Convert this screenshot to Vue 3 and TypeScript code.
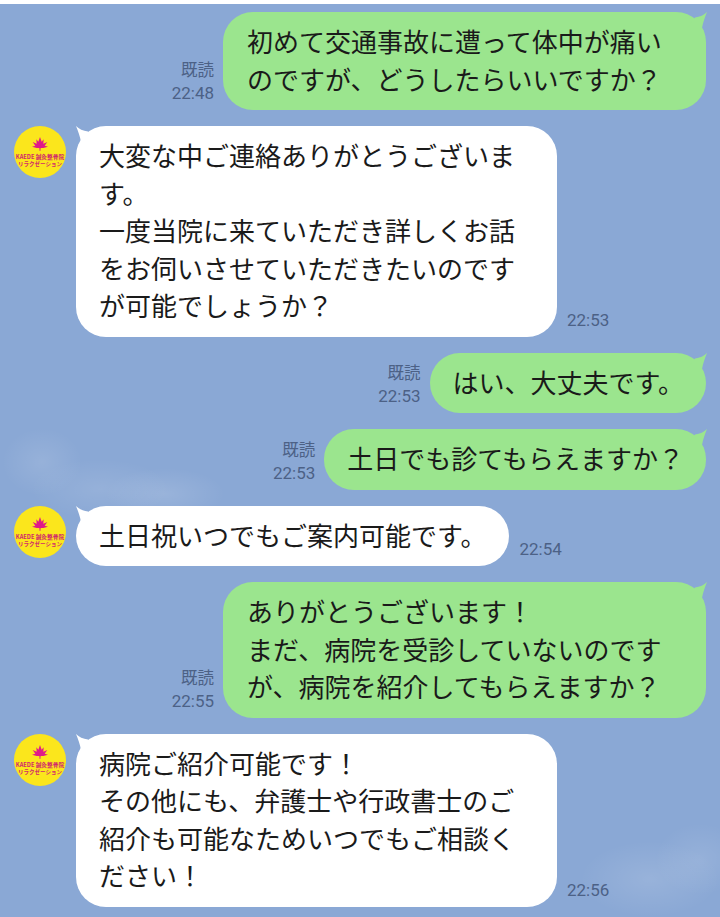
<template>
  <main class="chat">
    <template v-for="(msg, i) in messages" :key="i">
      <div v-if="msg.mine" class="row row--mine">
        <div class="meta meta--mine">
          <span class="meta__read">既読</span>
          <span>{{ msg.time }}</span>
        </div>
        <div class="bubble bubble--mine" :class="{ 'bubble--wide': msg.lines.length > 1 }">
          <div v-for="line in msg.lines" :key="line">{{ line }}</div>
          <svg class="tail tail--mine" viewBox="0 0 20 16" width="20" height="16" aria-hidden="true">
            <path d="M20 0C17 3 13 5 8 5.500L0 16L15 16C16 10 18 5 20 0Z" />
          </svg>
        </div>
      </div>
      <div v-else class="row">
        <div class="avatar">
          <svg viewBox="0 0 24 21" width="16" height="14" aria-hidden="true">
            <path d="M12 0L14.500 7L17.500 3.500L17 10L23 7.500L19 13L24 14.500L17 16.500L13 16.500L12.500 21L11.500 21L11 16.500L7 16.500L0 14.500L5 13L1 7.500L7 10L6.500 3.500L9.500 7Z" />
          </svg>
          <span class="avatar__name">KAEDE 鍼灸整骨院</span>
          <span class="avatar__sub">リラクゼーション</span>
        </div>
        <div class="bubble bubble--theirs" :class="{ 'bubble--wide': msg.lines.length > 1 }">
          <div v-for="line in msg.lines" :key="line">{{ line }}</div>
          <svg class="tail tail--theirs" viewBox="0 0 20 16" width="20" height="16" aria-hidden="true">
            <path d="M0 0C3 3 7 5 12 5.500L20 16L5 16C4 10 2 5 0 0Z" />
          </svg>
        </div>
        <div class="meta">{{ msg.time }}</div>
      </div>
    </template>
  </main>
</template>

<script setup lang="ts">
type Message = {
  mine: boolean
  time: string
  lines: string[]
}

const messages: Message[] = [
  { mine: true, time: '22:48', lines: ['初めて交通事故に遭って体中が痛い', 'のですが、どうしたらいいですか？'] },
  {
    mine: false,
    time: '22:53',
    lines: ['大変な中ご連絡ありがとうございま', 'す。', '一度当院に来ていただき詳しくお話', 'をお伺いさせていただきたいのです', 'が可能でしょうか？'],
  },
  { mine: true, time: '22:53', lines: ['はい、大丈夫です。'] },
  { mine: true, time: '22:53', lines: ['土日でも診てもらえますか？'] },
  { mine: false, time: '22:54', lines: ['土日祝いつでもご案内可能です。'] },
  {
    mine: true,
    time: '22:55',
    lines: ['ありがとうございます！', 'まだ、病院を受診していないのです', 'が、病院を紹介してもらえますか？'],
  },
  {
    mine: false,
    time: '22:56',
    lines: ['病院ご紹介可能です！', 'その他にも、弁護士や行政書士のご', '紹介も可能なためいつでもご相談く', 'ださい！'],
  },
]
</script>

<style scoped>
.chat {
  display: flex;
  flex-direction: column;
  gap: 16px;
  box-sizing: border-box;
  width: 720px;
  height: 917px;
  overflow: hidden;
  padding: 8px 14px 0;
  border-top: 4px solid #fff;
  background:
    radial-gradient(ellipse 40px 34px at 42px 458px, rgb(255 255 255 / 11%), transparent),
    radial-gradient(ellipse 70px 30px at 100px 485px, rgb(255 255 255 / 10%), transparent),
    radial-gradient(ellipse 60px 26px at 165px 490px, rgb(255 255 255 / 13%), transparent),
    radial-gradient(ellipse 70px 38px at 650px 875px, rgb(255 255 255 / 12%), transparent),
    radial-gradient(ellipse 45px 36px at 700px 855px, rgb(255 255 255 / 10%), transparent),
    #8aa8d5;
  color: #1a1a1a;
  font-family: "Noto Sans CJK JP", "Liberation Sans", sans-serif;
}

.row {
  display: flex;
  align-items: flex-end;
}

.row--mine {
  justify-content: flex-end;
}

.avatar {
  display: flex;
  flex: none;
  flex-direction: column;
  align-items: center;
  align-self: flex-start;
  box-sizing: border-box;
  width: 52px;
  height: 52px;
  margin-right: 10px;
  padding-top: 11px;
  border-radius: 50%;
  background: #fbe61c;
  color: #d0286c;
  text-align: center;
}

.avatar svg {
  flex: none;
  fill: #e0198a;
}

.avatar__name,
.avatar__sub {
  font-weight: 700;
  line-height: 7px;
  white-space: nowrap;
}

.avatar__name {
  margin-top: 2px;
  font-size: 5.700px;
}

.avatar__sub {
  margin-top: 1px;
  font-size: 5.500px;
}

.bubble {
  position: relative;
  box-sizing: border-box;
  padding: 10px 23px 13px 23px;
  border-radius: 30px;
  font-size: 26px;
  line-height: 37.500px;
  white-space: nowrap;
}

.bubble--mine {
  padding-right: 22px;
  background: #9be58e;
}

.bubble--mine.bubble--wide {
  width: 483px;
  padding-left: 24px;
}

.bubble--theirs {
  background: #fff;
}

.bubble--theirs.bubble--wide {
  width: 481px;
}

.tail {
  position: absolute;
  top: 0;
}

.tail--mine {
  right: -1px;
  fill: #9be58e;
}

.tail--theirs {
  left: 0;
  fill: #fff;
}

.meta {
  margin-left: 10px;
  padding-bottom: 6px;
  color: #4c6186;
  font-family: Roboto, "Liberation Sans", sans-serif;
  font-size: 17px;
  line-height: 22px;
}

.meta--mine {
  display: flex;
  flex-direction: column;
  align-items: flex-end;
  margin: 0 9px 0 0;
}

.meta__read {
  margin-bottom: 2px;
  font-family: "Noto Sans CJK JP", sans-serif;
  font-size: 16.500px;
}
</style>
